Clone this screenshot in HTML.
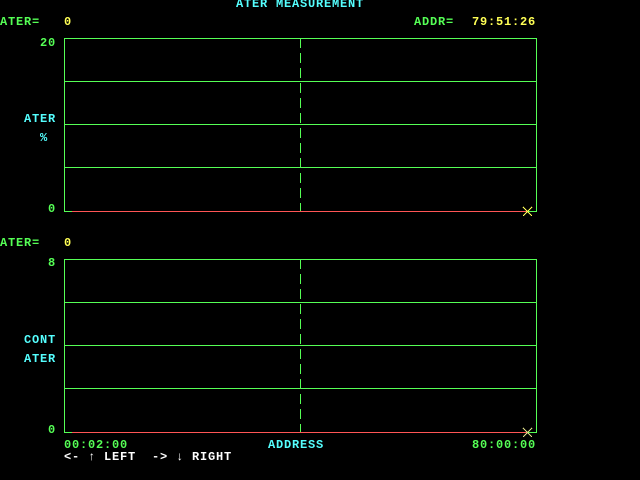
<!DOCTYPE html>
<html><head><meta charset="utf-8"><style>
html,body{margin:0;padding:0;background:#000;width:640px;height:480px;overflow:hidden}
.t{position:absolute;font-family:"Liberation Mono","DejaVu Sans Mono",monospace;font-weight:bold;font-size:12px;line-height:12px;letter-spacing:0.8px;white-space:pre}
.g{color:#55ff55}.y{color:#ffff55}.c{color:#55ffff}.w{color:#fff}
</style></head><body>
<svg width="640" height="480" style="position:absolute;left:0;top:0" shape-rendering="crispEdges">
<g stroke="#55ff55" stroke-width="1" fill="none">
<rect x="64.5" y="38.5" width="472" height="173"/>
<line x1="64" y1="81.5" x2="537" y2="81.5"/>
<line x1="64" y1="124.5" x2="537" y2="124.5"/>
<line x1="64" y1="167.5" x2="537" y2="167.5"/>
<line x1="300.5" y1="38" x2="300.5" y2="211" stroke-dasharray="10,5"/>
<rect x="64.5" y="259.5" width="472" height="173"/>
<line x1="64" y1="302.5" x2="537" y2="302.5"/>
<line x1="64" y1="345.5" x2="537" y2="345.5"/>
<line x1="64" y1="388.5" x2="537" y2="388.5"/>
<line x1="300.5" y1="259" x2="300.5" y2="432" stroke-dasharray="10,5"/>
</g>
<g stroke="#ff5555">
<line x1="72" y1="211.5" x2="527" y2="211.5"/>
<line x1="72" y1="432.5" x2="527" y2="432.5"/>
</g>
<g stroke="#ffff55" stroke-width="1">
<line x1="523" y1="207" x2="532" y2="216"/><line x1="532" y1="207" x2="523" y2="216"/>
</g>
<g stroke="#dddd88" stroke-width="1">
<line x1="523" y1="428" x2="532" y2="437"/><line x1="532" y1="428" x2="523" y2="437"/>
</g>
</svg>
<div class="t c" style="left:236px;top:-2px">ATER MEASUREMENT</div>
<div class="t g" style="left:0;top:16px">ATER=</div>
<div class="t y" style="left:64px;top:16px">0</div>
<div class="t g" style="left:414px;top:16px">ADDR=</div>
<div class="t y" style="left:472px;top:16px">79:51:26</div>
<div class="t g" style="left:40px;top:37px">20</div>
<div class="t c" style="left:24px;top:113px">ATER</div>
<div class="t c" style="left:40px;top:132px">%</div>
<div class="t g" style="left:48px;top:203px">0</div>
<div class="t g" style="left:0;top:237px">ATER=</div>
<div class="t y" style="left:64px;top:237px">0</div>
<div class="t g" style="left:48px;top:257px">8</div>
<div class="t c" style="left:24px;top:334px">CONT</div>
<div class="t c" style="left:24px;top:353px">ATER</div>
<div class="t g" style="left:48px;top:424px">0</div>
<div class="t g" style="left:64px;top:439px">00:02:00</div>
<div class="t c" style="left:268px;top:439px">ADDRESS</div>
<div class="t g" style="left:472px;top:439px">80:00:00</div>
<div class="t w" style="left:64px;top:451px">&lt;- ↑ LEFT  -&gt; ↓ RIGHT</div>
</body></html>
